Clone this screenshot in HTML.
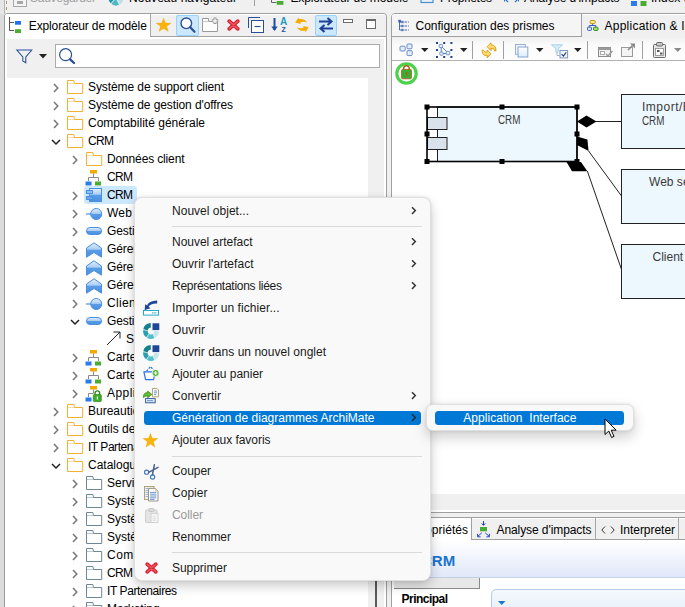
<!DOCTYPE html>
<html lang="fr"><head><meta charset="utf-8"><title>Explorateur de modèle</title>
<style>
html,body{margin:0;padding:0;}
body{width:685px;height:607px;overflow:hidden;background:#f0f0f0;position:relative;font-family:"Liberation Sans",sans-serif;font-size:12px;}
#root{position:absolute;left:0;top:0;width:685px;height:607px;overflow:hidden;}
.b{position:absolute;box-sizing:content-box;display:block;}
.t{position:absolute;white-space:pre;display:block;}
svg{overflow:visible;}
</style></head><body><div id="root">
<div class="b" style="left:0px;top:0px;width:685px;height:14px;background:#f0f0f0;"></div>
<svg class="b" style="left:13px;top:-6.5px;" width="14" height="16" viewBox="0 0 14 16"><rect x="0.5" y="0.5" width="13" height="12" fill="#f4f4f4" stroke="#a8a8a8"/><rect x="4" y="7" width="6" height="3" fill="#a8a8a8"/></svg>
<span class="t" style="left:30.0px;top:-10.7px;line-height:18px;font-size:12px;color:#a0a0a0;letter-spacing:-0.270px;">Sauvegarder</span>
<svg class="b" style="left:107.8px;top:-9.7px;" width="16" height="16" viewBox="0 0 16 16"><path d="M8 8L13.75 3.18A7.5 7.5 0 0 1 11.52 14.62Z" fill="#b8e0e6"/><path d="M8 8L11.52 14.62A7.5 7.5 0 0 1 2.98 13.57Z" fill="#4fb8c4"/><path d="M8 8L2.98 13.57A7.5 7.5 0 0 1 6.70 0.61Z" fill="#1a9ab0"/><path d="M8 8L11.76 15.06M8 8L2.65 13.95" stroke="#f4f8f8" stroke-width=".9"/></svg>
<span class="t" style="left:129.0px;top:-10.7px;line-height:18px;font-size:12px;color:#000;letter-spacing:0.036px;">Nouveau navigateur</span>
<div class="b" style="left:254px;top:0px;width:1px;height:6px;background:#a0a0a0;"></div>
<svg class="b" style="left:270px;top:-6px;" width="14" height="12" viewBox="0 0 14 12"><path d="M1.5 0V8.5H6.5" fill="none" stroke="#666" stroke-width="1"/><rect x="6.8" y="7" width="6.6" height="3.8" fill="#49ad33"/></svg>
<span class="t" style="left:290.5px;top:-10.7px;line-height:18px;font-size:12px;color:#000;letter-spacing:-0.136px;">Explorateur de modèle</span>
<svg class="b" style="left:420px;top:-8px;" width="14" height="12" viewBox="0 0 14 12"><rect x="1" y="0" width="12" height="10.5" fill="#e8f1fb" stroke="#4a90c8" stroke-width="1.2"/><path d="M4 7L9 3" stroke="#4a5fa8" stroke-width="1.3"/></svg>
<span class="t" style="left:440.0px;top:-10.7px;line-height:18px;font-size:12px;color:#000;letter-spacing:-0.299px;">Propriétés</span>
<svg class="b" style="left:504px;top:-2px;" width="15" height="8" viewBox="0 0 15 8"><path d="M1 1L4 4M14 1L11 4" stroke="#2a6fc0" stroke-width="1.2"/><path d="M0.5 3.5V0.5H3.5M14.5 3.5V0.5H11.5" stroke="#2a6fc0" stroke-width="1" fill="none"/></svg>
<span class="t" style="left:524.0px;top:-10.7px;line-height:18px;font-size:12px;color:#000;letter-spacing:-0.052px;">Analyse d'impacts</span>
<svg class="b" style="left:631px;top:1px;" width="16" height="6" viewBox="0 0 16 6"><rect x="0" y="0" width="6" height="5" fill="#2b7bea"/><rect x="9.5" y="0" width="6" height="5" fill="#49ad33"/></svg>
<span class="t" style="left:651.0px;top:-10.7px;line-height:18px;font-size:12px;color:#000;letter-spacing:-0.002px;">Index des</span>
<div class="b" style="left:0px;top:14px;width:4px;height:600px;background:#dcdcdc;"></div>
<div class="b" style="left:0px;top:0px;width:4px;height:14px;background:#e6e6e6;"></div>
<div class="b" style="left:3.5px;top:0px;width:1px;height:14px;background:#b4b4b4;"></div>
<div class="b" style="left:6px;top:1px;width:1px;height:3px;background:#b09a6a;"></div>
<div class="b" style="left:6px;top:7px;width:1px;height:3px;background:#b09a6a;"></div>
<div class="b" style="left:3.5px;top:13px;width:381px;height:600px;background:#fff;border:1px solid #a0a0a0;border-left:1.5px solid #9a9a9a;border-radius:4px 4px 0 0;"></div>
<div class="b" style="left:7px;top:39px;width:376.5px;height:580px;background:#f0f0f0;"></div>
<div class="b" style="left:5px;top:14px;width:381px;height:22px;background:linear-gradient(#fff 0,#fff 1px,#f0f0f0 1px);border-bottom:1px solid #a0a0a0;border-radius:3px 3px 0 0;"></div>
<div class="b" style="left:5px;top:14px;width:145px;height:23px;background:#fff;border-right:1px solid #a6a6a6;border-radius:3px 0 0 0;"></div>
<svg class="b" style="left:8px;top:17px;" width="14" height="17" viewBox="0 0 14 17"><path d="M1.5 0V13.5H6" fill="none" stroke="#555" stroke-width="1"/><path d="M1.5 5.5H6" stroke="#555" stroke-width="1"/><rect x="7" y="4" width="6" height="3.7" fill="#1f6ff0"/><rect x="7" y="12.2" width="6" height="3.8" fill="#49ad33"/></svg>
<span class="t" style="left:28.8px;top:16.5px;line-height:18px;font-size:12px;color:#000;letter-spacing:-0.136px;">Explorateur de modèle</span>
<svg class="b" style="left:155.8px;top:18.4px;" width="15.4" height="14" viewBox="0 0 15.4 14"><g transform="scale(.95 .9)"><path d="M8 0.4L9.9 5.6L15.8 5.8L11.2 9.3L12.8 14.8L8 11.6L3.2 14.8L4.8 9.3L0.2 5.8L6.1 5.6Z" fill="#f9b30a" stroke="#e8a000" stroke-width=".4"/></g></svg>
<div class="b" style="left:176px;top:14.5px;width:21px;height:19px;background:#cce8ff;border:1px solid #99d1ff;border-radius:2px;"></div>
<svg class="b" style="left:180px;top:17px;" width="16" height="16" viewBox="0 0 16 16"><circle cx="6.3" cy="6.3" r="5.3" fill="#fff" stroke="#2a4f9a" stroke-width="1.4"/><path d="M10.2 10.2L14.5 14.8" stroke="#2a4f9a" stroke-width="2.2" stroke-linecap="round"/></svg>
<svg class="b" style="left:202px;top:17px;" width="17" height="16" viewBox="0 0 17 16"><path d="M0.5 14.5V1.5H6.5V4.5H15.5V14.5Z" fill="#fcfcfc" stroke="#9a9a9a" stroke-width="1"/><path d="M0.5 4.5H6.5" stroke="#c8c8c8" stroke-width="1"/><path d="M13 0.6V7M9.8 3.8H16.2" stroke="#9a9a9a" stroke-width="3"/><path d="M13 1.5V6.1M10.7 3.8H15.3" stroke="#fff" stroke-width="1.2"/></svg>
<svg class="b" style="left:227px;top:19px;" width="13" height="12" viewBox="0 0 13 12"><path d="M2.2 2.2L10.8 9.8M10.8 2.2L2.2 9.8" stroke="#d41f2c" stroke-width="3.8" stroke-linecap="round"/><path d="M2.4 2.4L10.6 9.6M10.6 2.4L2.4 9.6" stroke="#f2525f" stroke-width="1.5" stroke-linecap="round"/></svg>
<svg class="b" style="left:248px;top:17px;" width="16" height="16" viewBox="0 0 16 16"><path d="M0.5 11V0.5H12" fill="none" stroke="#2a4f9a" stroke-width="1"/><rect x="3.5" y="3.5" width="12" height="12" fill="#fff" stroke="#2a4f9a" stroke-width="1"/><path d="M6.5 9.5H12.5" stroke="#2a4f9a" stroke-width="1.2"/></svg>
<svg class="b" style="left:271px;top:17px;" width="17" height="17" viewBox="0 0 17 17"><path d="M3.5 1V13" stroke="#1f4e9c" stroke-width="2"/><path d="M0.3 9.5L3.5 14L6.7 9.5Z" fill="#1f4e9c"/><text x="9" y="8.4" font-family="Liberation Sans, sans-serif" font-size="10" font-weight="bold" fill="#1f9dc0">A</text><text x="10.5" y="15" font-family="Liberation Sans, sans-serif" font-size="7" font-weight="bold" fill="#1f4e9c">Z</text></svg>
<svg class="b" style="left:290px;top:13px;" width="26" height="24" viewBox="0 0 26 24"><path d="M5.1 9.5L8.5 4.7L9 6.2C12 5.6 15.5 6.6 17.2 9.5C15 8.3 12.5 8.5 10.2 9.6L10.7 10.9Z" fill="#f5ab00"/><path d="M18.6 14.2L15.6 19.2L15 17.6C12 18.4 8.5 17.4 6.9 14.2C9 15.6 11.5 15.6 13.6 14.4L13.2 13Z" fill="#f5ab00"/></svg>
<div class="b" style="left:314.5px;top:14.5px;width:20.5px;height:19px;background:#cce8ff;border:1px solid #99d1ff;border-radius:2px;"></div>
<svg class="b" style="left:318px;top:17px;" width="16" height="16" viewBox="0 0 16 16"><path d="M1 4.5H13M9.5 1L13.5 4.5L9.5 8" fill="none" stroke="#1f3f94" stroke-width="2"/><path d="M15 11.5H3M6.5 8L2.5 11.5L6.5 15" fill="none" stroke="#1f3f94" stroke-width="2"/></svg>
<div class="b" style="left:343px;top:19.3px;width:8px;height:2px;border:1px solid #6a6a6a;background:#fff;"></div>
<div class="b" style="left:366px;top:19px;width:9px;height:9px;border:1px solid #6a6a6a;border-top:2px solid #6a6a6a;background:#fff;box-sizing:border-box;width:10.2px;height:10.4px;"></div>
<svg class="b" style="left:16px;top:48.5px;" width="17" height="15" viewBox="0 0 17 15"><path d="M0.8 1H15.8L9.8 8V13.8L6.8 12V8Z" fill="none" stroke="#2a4fa0" stroke-width="1.05" stroke-linejoin="miter"/></svg>
<svg class="b" style="left:39px;top:54px;" width="9" height="5" viewBox="0 0 9 5"><path d="M0 0H8L4 4.5Z" fill="#222"/></svg>
<div class="b" style="left:55px;top:44px;width:322.5px;height:22px;background:#fff;border:1px solid #ababab;"></div>
<svg class="b" style="left:59px;top:47.5px;" width="17" height="17" viewBox="0 0 17 17"><circle cx="6.6" cy="6.7" r="6" fill="#fff" stroke="#2a4f9a" stroke-width="1.2"/><path d="M11.2 11.4L15 15" stroke="#2a4f9a" stroke-width="2.4" stroke-linecap="round"/></svg>
<div class="b" style="left:5px;top:78px;width:363px;height:540px;background:#fff;"></div>
<div class="b" style="left:375px;top:400px;width:1.6px;height:220px;background:#5a5a5a;"></div>
<svg class="b" style="left:52.6px;top:83.2px;" width="6" height="10" viewBox="0 0 6 10"><path d="M1 1L4.8 5L1 9" fill="none" stroke="#767676" stroke-width="1.5"/></svg>
<svg class="b" style="left:67px;top:80px;" width="16" height="14" viewBox="0 0 16 14"><path d="M0.5 13.5V0.5H6.8L7.5 3.5H15.7V13.5Z" fill="#fff" stroke="#f2b134" stroke-width="1"/><path d="M0.5 3.5H7.5" fill="none" stroke="#f2b134" stroke-width="1" opacity=".45"/></svg>
<span class="t" style="left:88.0px;top:78.0px;line-height:18px;font-size:12px;color:#000;letter-spacing:-0.085px;">Système de support client</span>
<svg class="b" style="left:52.6px;top:101.2px;" width="6" height="10" viewBox="0 0 6 10"><path d="M1 1L4.8 5L1 9" fill="none" stroke="#767676" stroke-width="1.5"/></svg>
<svg class="b" style="left:67px;top:98px;" width="16" height="14" viewBox="0 0 16 14"><path d="M0.5 13.5V0.5H6.8L7.5 3.5H15.7V13.5Z" fill="#fff" stroke="#f2b134" stroke-width="1"/><path d="M0.5 3.5H7.5" fill="none" stroke="#f2b134" stroke-width="1" opacity=".45"/></svg>
<span class="t" style="left:88.0px;top:96.0px;line-height:18px;font-size:12px;color:#000;letter-spacing:-0.094px;">Système de gestion d'offres</span>
<svg class="b" style="left:52.6px;top:119.2px;" width="6" height="10" viewBox="0 0 6 10"><path d="M1 1L4.8 5L1 9" fill="none" stroke="#767676" stroke-width="1.5"/></svg>
<svg class="b" style="left:67px;top:116px;" width="16" height="14" viewBox="0 0 16 14"><path d="M0.5 13.5V0.5H6.8L7.5 3.5H15.7V13.5Z" fill="#fff" stroke="#f2b134" stroke-width="1"/><path d="M0.5 3.5H7.5" fill="none" stroke="#f2b134" stroke-width="1" opacity=".45"/></svg>
<span class="t" style="left:88.0px;top:114.0px;line-height:18px;font-size:12px;color:#000;letter-spacing:0.013px;">Comptabilité générale</span>
<svg class="b" style="left:50.6px;top:139px;" width="10" height="6" viewBox="0 0 10 6"><path d="M1 1L5 5L9 1" fill="none" stroke="#222" stroke-width="1.5"/></svg>
<svg class="b" style="left:67px;top:134px;" width="16" height="14" viewBox="0 0 16 14"><path d="M0.5 13.5V0.5H6.8L7.5 3.5H15.7V13.5Z" fill="#fff" stroke="#f2b134" stroke-width="1"/><path d="M0.5 3.5H7.5" fill="none" stroke="#f2b134" stroke-width="1" opacity=".45"/></svg>
<span class="t" style="left:88.0px;top:132.0px;line-height:18px;font-size:12px;color:#000;letter-spacing:-0.672px;">CRM</span>
<svg class="b" style="left:71.6px;top:155.2px;" width="6" height="10" viewBox="0 0 6 10"><path d="M1 1L4.8 5L1 9" fill="none" stroke="#767676" stroke-width="1.5"/></svg>
<svg class="b" style="left:86px;top:152px;" width="16" height="14" viewBox="0 0 16 14"><path d="M0.5 13.5V0.5H6.8L7.5 3.5H15.7V13.5Z" fill="#fff" stroke="#f2b134" stroke-width="1"/><path d="M0.5 3.5H7.5" fill="none" stroke="#f2b134" stroke-width="1" opacity=".45"/></svg>
<span class="t" style="left:107.0px;top:150.0px;line-height:18px;font-size:12px;color:#000;letter-spacing:-0.144px;">Données client</span>
<svg class="b" style="left:85.4px;top:169.5px;" width="16" height="16" viewBox="0 0 16 16"><rect x="5" y="0" width="7" height="3.5" fill="#f5a800"/><path d="M8.5 3.5V7.5M3.5 11V7.5H13.5V11" fill="none" stroke="#8a8a8a" stroke-width="1"/><rect x="0.5" y="11.5" width="6" height="4" fill="#2b7bea"/><rect x="10" y="11.5" width="6" height="4" fill="#49ad33"/></svg>
<span class="t" style="left:107.0px;top:168.0px;line-height:18px;font-size:12px;color:#000;letter-spacing:-0.672px;">CRM</span>
<div class="b" style="left:84px;top:186px;width:53px;height:18px;background:#cce8ff;border-radius:3px;"></div>
<svg class="b" style="left:71.6px;top:191.2px;" width="6" height="10" viewBox="0 0 6 10"><path d="M1 1L4.8 5L1 9" fill="none" stroke="#767676" stroke-width="1.5"/></svg>
<svg class="b" style="left:86.4px;top:187.5px;" width="16" height="16" viewBox="0 0 16 16"><defs><linearGradient id="gc" x1="0" y1="0" x2="0" y2="1"><stop offset="0" stop-color="#e6f1fc"/><stop offset=".45" stop-color="#a9cdf3"/><stop offset=".5" stop-color="#5a9de6"/><stop offset="1" stop-color="#4a8fe0"/></linearGradient></defs><rect x="3.5" y="0.5" width="12" height="13" fill="url(#gc)" stroke="#4a8fe0" stroke-width="1"/><rect x="0.5" y="2.5" width="6" height="3" fill="#8fbef0" stroke="#4a8fe0" stroke-width="1"/><rect x="0.5" y="8.5" width="6" height="3" fill="#6aa8ea" stroke="#4a8fe0" stroke-width="1"/></svg>
<span class="t" style="left:107.0px;top:186.0px;line-height:18px;font-size:12px;color:#000;letter-spacing:-0.672px;">CRM</span>
<svg class="b" style="left:71.6px;top:209.2px;" width="6" height="10" viewBox="0 0 6 10"><path d="M1 1L4.8 5L1 9" fill="none" stroke="#767676" stroke-width="1.5"/></svg>
<svg class="b" style="left:86.4px;top:205.5px;" width="16" height="16" viewBox="0 0 16 16"><defs><linearGradient id="gi" x1="0" y1="0" x2="0" y2="1"><stop offset="0" stop-color="#e6f1fc"/><stop offset=".45" stop-color="#a9cdf3"/><stop offset=".5" stop-color="#5a9de6"/><stop offset="1" stop-color="#4a8fe0"/></linearGradient></defs><path d="M0 8H5" stroke="#4a8fe0" stroke-width="1.2"/><circle cx="10.2" cy="8" r="5.5" fill="url(#gi)" stroke="#4a8fe0" stroke-width="1"/></svg>
<span class="t" style="left:107.0px;top:204.0px;line-height:18px;font-size:12px;color:#000;letter-spacing:0.220px;">Web service</span>
<svg class="b" style="left:71.6px;top:227.2px;" width="6" height="10" viewBox="0 0 6 10"><path d="M1 1L4.8 5L1 9" fill="none" stroke="#767676" stroke-width="1.5"/></svg>
<svg class="b" style="left:86.4px;top:222.7px;" width="16" height="16" viewBox="0 0 16 16"><defs><linearGradient id="gs" x1="0" y1="0" x2="0" y2="1"><stop offset="0" stop-color="#e6f1fc"/><stop offset=".45" stop-color="#a9cdf3"/><stop offset=".5" stop-color="#5a9de6"/><stop offset="1" stop-color="#4a8fe0"/></linearGradient></defs><rect x="0.5" y="4.5" width="15" height="7" rx="3.5" fill="url(#gs)" stroke="#4a8fe0" stroke-width="1"/></svg>
<span class="t" style="left:107.0px;top:222.0px;line-height:18px;font-size:12px;color:#000;letter-spacing:-0.076px;">Gestion des clients</span>
<svg class="b" style="left:71.6px;top:245.2px;" width="6" height="10" viewBox="0 0 6 10"><path d="M1 1L4.8 5L1 9" fill="none" stroke="#767676" stroke-width="1.5"/></svg>
<svg class="b" style="left:86.4px;top:241.5px;" width="16" height="16" viewBox="0 0 16 16"><defs><linearGradient id="gf" x1="0" y1="0" x2="0" y2="1"><stop offset="0" stop-color="#e6f1fc"/><stop offset=".45" stop-color="#a9cdf3"/><stop offset=".5" stop-color="#5a9de6"/><stop offset="1" stop-color="#4a8fe0"/></linearGradient></defs><path d="M0.5 6L8 0.8L15.5 6V15.2L8 10.5L0.5 15.2Z" fill="url(#gf)" stroke="#4a8fe0" stroke-width="1"/></svg>
<span class="t" style="left:107.0px;top:240.0px;line-height:18px;font-size:12px;color:#000;letter-spacing:-0.105px;">Gérer les clients</span>
<svg class="b" style="left:71.6px;top:263.2px;" width="6" height="10" viewBox="0 0 6 10"><path d="M1 1L4.8 5L1 9" fill="none" stroke="#767676" stroke-width="1.5"/></svg>
<svg class="b" style="left:86.4px;top:259.5px;" width="16" height="16" viewBox="0 0 16 16"><defs><linearGradient id="gf" x1="0" y1="0" x2="0" y2="1"><stop offset="0" stop-color="#e6f1fc"/><stop offset=".45" stop-color="#a9cdf3"/><stop offset=".5" stop-color="#5a9de6"/><stop offset="1" stop-color="#4a8fe0"/></linearGradient></defs><path d="M0.5 6L8 0.8L15.5 6V15.2L8 10.5L0.5 15.2Z" fill="url(#gf)" stroke="#4a8fe0" stroke-width="1"/></svg>
<span class="t" style="left:107.0px;top:258.0px;line-height:18px;font-size:12px;color:#000;letter-spacing:-0.138px;">Gérer les contacts</span>
<svg class="b" style="left:71.6px;top:281.2px;" width="6" height="10" viewBox="0 0 6 10"><path d="M1 1L4.8 5L1 9" fill="none" stroke="#767676" stroke-width="1.5"/></svg>
<svg class="b" style="left:86.4px;top:277.5px;" width="16" height="16" viewBox="0 0 16 16"><defs><linearGradient id="gf" x1="0" y1="0" x2="0" y2="1"><stop offset="0" stop-color="#e6f1fc"/><stop offset=".45" stop-color="#a9cdf3"/><stop offset=".5" stop-color="#5a9de6"/><stop offset="1" stop-color="#4a8fe0"/></linearGradient></defs><path d="M0.5 6L8 0.8L15.5 6V15.2L8 10.5L0.5 15.2Z" fill="url(#gf)" stroke="#4a8fe0" stroke-width="1"/></svg>
<span class="t" style="left:107.0px;top:276.0px;line-height:18px;font-size:12px;color:#000;letter-spacing:-0.030px;">Gérer les offres</span>
<svg class="b" style="left:71.6px;top:299.2px;" width="6" height="10" viewBox="0 0 6 10"><path d="M1 1L4.8 5L1 9" fill="none" stroke="#767676" stroke-width="1.5"/></svg>
<svg class="b" style="left:86.4px;top:295.5px;" width="16" height="16" viewBox="0 0 16 16"><defs><linearGradient id="gi" x1="0" y1="0" x2="0" y2="1"><stop offset="0" stop-color="#e6f1fc"/><stop offset=".45" stop-color="#a9cdf3"/><stop offset=".5" stop-color="#5a9de6"/><stop offset="1" stop-color="#4a8fe0"/></linearGradient></defs><path d="M0 8H5" stroke="#4a8fe0" stroke-width="1.2"/><circle cx="10.2" cy="8" r="5.5" fill="url(#gi)" stroke="#4a8fe0" stroke-width="1"/></svg>
<span class="t" style="left:107.0px;top:294.0px;line-height:18px;font-size:12px;color:#000;letter-spacing:0.330px;">Client web</span>
<svg class="b" style="left:69.6px;top:319px;" width="10" height="6" viewBox="0 0 10 6"><path d="M1 1L5 5L9 1" fill="none" stroke="#222" stroke-width="1.5"/></svg>
<svg class="b" style="left:86.4px;top:312.7px;" width="16" height="16" viewBox="0 0 16 16"><defs><linearGradient id="gs" x1="0" y1="0" x2="0" y2="1"><stop offset="0" stop-color="#e6f1fc"/><stop offset=".45" stop-color="#a9cdf3"/><stop offset=".5" stop-color="#5a9de6"/><stop offset="1" stop-color="#4a8fe0"/></linearGradient></defs><rect x="0.5" y="4.5" width="15" height="7" rx="3.5" fill="url(#gs)" stroke="#4a8fe0" stroke-width="1"/></svg>
<span class="t" style="left:107.0px;top:312.0px;line-height:18px;font-size:12px;color:#000;letter-spacing:-0.125px;">Gestion des offres</span>
<svg class="b" style="left:106px;top:331px;" width="15" height="15" viewBox="0 0 15 15"><path d="M1 14L14 1M7.5 1H14V7.5" fill="none" stroke="#222" stroke-width="1"/></svg>
<span class="t" style="left:126.0px;top:330.0px;line-height:18px;font-size:12px;color:#000;">Service de gestion</span>
<svg class="b" style="left:71.6px;top:353.2px;" width="6" height="10" viewBox="0 0 6 10"><path d="M1 1L4.8 5L1 9" fill="none" stroke="#767676" stroke-width="1.5"/></svg>
<svg class="b" style="left:85.4px;top:349.5px;" width="16" height="16" viewBox="0 0 16 16"><rect x="5" y="0" width="7" height="3.5" fill="#f5a800"/><path d="M8.5 3.5V7.5M3.5 11V7.5H13.5V11" fill="none" stroke="#8a8a8a" stroke-width="1"/><rect x="0.5" y="11.5" width="6" height="4" fill="#2b7bea"/><rect x="10" y="11.5" width="6" height="4" fill="#49ad33"/></svg>
<span class="t" style="left:107.0px;top:348.0px;line-height:18px;font-size:12px;color:#000;">Carte applicative</span>
<svg class="b" style="left:71.6px;top:371.2px;" width="6" height="10" viewBox="0 0 6 10"><path d="M1 1L4.8 5L1 9" fill="none" stroke="#767676" stroke-width="1.5"/></svg>
<svg class="b" style="left:85.4px;top:367.5px;" width="16" height="16" viewBox="0 0 16 16"><rect x="5" y="0" width="7" height="3.5" fill="#f5a800"/><path d="M8.5 3.5V7.5M3.5 11V7.5H13.5V11" fill="none" stroke="#8a8a8a" stroke-width="1"/><rect x="0.5" y="11.5" width="6" height="4" fill="#2b7bea"/><rect x="10" y="11.5" width="6" height="4" fill="#49ad33"/></svg>
<span class="t" style="left:107.0px;top:366.0px;line-height:18px;font-size:12px;color:#000;">Carte des services</span>
<svg class="b" style="left:71.6px;top:389.2px;" width="6" height="10" viewBox="0 0 6 10"><path d="M1 1L4.8 5L1 9" fill="none" stroke="#767676" stroke-width="1.5"/></svg>
<svg class="b" style="left:85.4px;top:385.5px;" width="16" height="16" viewBox="0 0 16 16"><rect x="5" y="0" width="7" height="3.5" fill="#f5a800"/><path d="M8.5 3.5V7.5M3.5 11V7.5H8" fill="none" stroke="#8a8a8a" stroke-width="1"/><rect x="0.5" y="11.5" width="6" height="4" fill="#2b7bea"/><path d="M10 9V7.2a2.3 2.3 0 0 1 4.6 0V9" fill="none" stroke="#2e8b1f" stroke-width="1.4"/><rect x="8.3" y="8.6" width="8" height="7" rx="1" fill="#3fae2a" stroke="#2e8b1f" stroke-width=".8"/><rect x="11.8" y="10.5" width="1.2" height="3" fill="#fff"/></svg>
<span class="t" style="left:107.0px;top:384.0px;line-height:18px;font-size:12px;color:#000;letter-spacing:0.433px;">Application &amp; Interfaces</span>
<svg class="b" style="left:52.6px;top:407.2px;" width="6" height="10" viewBox="0 0 6 10"><path d="M1 1L4.8 5L1 9" fill="none" stroke="#767676" stroke-width="1.5"/></svg>
<svg class="b" style="left:67px;top:404px;" width="16" height="14" viewBox="0 0 16 14"><path d="M0.5 13.5V0.5H6.8L7.5 3.5H15.7V13.5Z" fill="#fff" stroke="#f2b134" stroke-width="1"/><path d="M0.5 3.5H7.5" fill="none" stroke="#f2b134" stroke-width="1" opacity=".45"/></svg>
<span class="t" style="left:88.0px;top:402.0px;line-height:18px;font-size:12px;color:#000;">Bureautique</span>
<svg class="b" style="left:52.6px;top:425.2px;" width="6" height="10" viewBox="0 0 6 10"><path d="M1 1L4.8 5L1 9" fill="none" stroke="#767676" stroke-width="1.5"/></svg>
<svg class="b" style="left:67px;top:422px;" width="16" height="14" viewBox="0 0 16 14"><path d="M0.5 13.5V0.5H6.8L7.5 3.5H15.7V13.5Z" fill="#fff" stroke="#f2b134" stroke-width="1"/><path d="M0.5 3.5H7.5" fill="none" stroke="#f2b134" stroke-width="1" opacity=".45"/></svg>
<span class="t" style="left:88.0px;top:420.0px;line-height:18px;font-size:12px;color:#000;">Outils de développement</span>
<svg class="b" style="left:52.6px;top:443.2px;" width="6" height="10" viewBox="0 0 6 10"><path d="M1 1L4.8 5L1 9" fill="none" stroke="#767676" stroke-width="1.5"/></svg>
<svg class="b" style="left:67px;top:440px;" width="16" height="14" viewBox="0 0 16 14"><path d="M0.5 13.5V0.5H6.8L7.5 3.5H15.7V13.5Z" fill="#fff" stroke="#f2b134" stroke-width="1"/><path d="M0.5 3.5H7.5" fill="none" stroke="#f2b134" stroke-width="1" opacity=".45"/></svg>
<span class="t" style="left:88.0px;top:438.0px;line-height:18px;font-size:12px;color:#000;letter-spacing:-0.471px;">IT Partenaires</span>
<svg class="b" style="left:50.6px;top:463px;" width="10" height="6" viewBox="0 0 10 6"><path d="M1 1L5 5L9 1" fill="none" stroke="#222" stroke-width="1.5"/></svg>
<svg class="b" style="left:67px;top:458px;" width="16" height="14" viewBox="0 0 16 14"><path d="M0.5 13.5V0.5H6.8L7.5 3.5H15.7V13.5Z" fill="#fff" stroke="#f2b134" stroke-width="1"/><path d="M0.5 3.5H7.5" fill="none" stroke="#f2b134" stroke-width="1" opacity=".45"/></svg>
<span class="t" style="left:88.0px;top:456.0px;line-height:18px;font-size:12px;color:#000;">Catalogue de services</span>
<svg class="b" style="left:71.6px;top:479.2px;" width="6" height="10" viewBox="0 0 6 10"><path d="M1 1L4.8 5L1 9" fill="none" stroke="#767676" stroke-width="1.5"/></svg>
<svg class="b" style="left:86px;top:476px;" width="16" height="14" viewBox="0 0 16 14"><path d="M0.5 13.5V0.5H6.8L7.5 3.5H15.7V13.5Z" fill="#fff" stroke="#6e8794" stroke-width="1"/><path d="M0.5 3.5H7.5" fill="none" stroke="#6e8794" stroke-width="1" opacity=".45"/></svg>
<span class="t" style="left:107.0px;top:474.0px;line-height:18px;font-size:12px;color:#000;">Services transverses</span>
<svg class="b" style="left:71.6px;top:497.2px;" width="6" height="10" viewBox="0 0 6 10"><path d="M1 1L4.8 5L1 9" fill="none" stroke="#767676" stroke-width="1.5"/></svg>
<svg class="b" style="left:86px;top:494px;" width="16" height="14" viewBox="0 0 16 14"><path d="M0.5 13.5V0.5H6.8L7.5 3.5H15.7V13.5Z" fill="#fff" stroke="#6e8794" stroke-width="1"/><path d="M0.5 3.5H7.5" fill="none" stroke="#6e8794" stroke-width="1" opacity=".45"/></svg>
<span class="t" style="left:107.0px;top:492.0px;line-height:18px;font-size:12px;color:#000;">Système de support client</span>
<svg class="b" style="left:71.6px;top:515.2px;" width="6" height="10" viewBox="0 0 6 10"><path d="M1 1L4.8 5L1 9" fill="none" stroke="#767676" stroke-width="1.5"/></svg>
<svg class="b" style="left:86px;top:512px;" width="16" height="14" viewBox="0 0 16 14"><path d="M0.5 13.5V0.5H6.8L7.5 3.5H15.7V13.5Z" fill="#fff" stroke="#6e8794" stroke-width="1"/><path d="M0.5 3.5H7.5" fill="none" stroke="#6e8794" stroke-width="1" opacity=".45"/></svg>
<span class="t" style="left:107.0px;top:510.0px;line-height:18px;font-size:12px;color:#000;">Système de gestion d'offres</span>
<svg class="b" style="left:71.6px;top:533.2px;" width="6" height="10" viewBox="0 0 6 10"><path d="M1 1L4.8 5L1 9" fill="none" stroke="#767676" stroke-width="1.5"/></svg>
<svg class="b" style="left:86px;top:530px;" width="16" height="14" viewBox="0 0 16 14"><path d="M0.5 13.5V0.5H6.8L7.5 3.5H15.7V13.5Z" fill="#fff" stroke="#6e8794" stroke-width="1"/><path d="M0.5 3.5H7.5" fill="none" stroke="#6e8794" stroke-width="1" opacity=".45"/></svg>
<span class="t" style="left:107.0px;top:528.0px;line-height:18px;font-size:12px;color:#000;">Système comptable</span>
<svg class="b" style="left:71.6px;top:551.2px;" width="6" height="10" viewBox="0 0 6 10"><path d="M1 1L4.8 5L1 9" fill="none" stroke="#767676" stroke-width="1.5"/></svg>
<svg class="b" style="left:86px;top:548px;" width="16" height="14" viewBox="0 0 16 14"><path d="M0.5 13.5V0.5H6.8L7.5 3.5H15.7V13.5Z" fill="#fff" stroke="#6e8794" stroke-width="1"/><path d="M0.5 3.5H7.5" fill="none" stroke="#6e8794" stroke-width="1" opacity=".45"/></svg>
<span class="t" style="left:107.0px;top:546.0px;line-height:18px;font-size:12px;color:#000;letter-spacing:0.463px;">Comptabilité générale</span>
<svg class="b" style="left:71.6px;top:569.2px;" width="6" height="10" viewBox="0 0 6 10"><path d="M1 1L4.8 5L1 9" fill="none" stroke="#767676" stroke-width="1.5"/></svg>
<svg class="b" style="left:86px;top:566px;" width="16" height="14" viewBox="0 0 16 14"><path d="M0.5 13.5V0.5H6.8L7.5 3.5H15.7V13.5Z" fill="#fff" stroke="#6e8794" stroke-width="1"/><path d="M0.5 3.5H7.5" fill="none" stroke="#6e8794" stroke-width="1" opacity=".45"/></svg>
<span class="t" style="left:107.0px;top:564.0px;line-height:18px;font-size:12px;color:#000;letter-spacing:-0.672px;">CRM</span>
<svg class="b" style="left:71.6px;top:587.2px;" width="6" height="10" viewBox="0 0 6 10"><path d="M1 1L4.8 5L1 9" fill="none" stroke="#767676" stroke-width="1.5"/></svg>
<svg class="b" style="left:86px;top:584px;" width="16" height="14" viewBox="0 0 16 14"><path d="M0.5 13.5V0.5H6.8L7.5 3.5H15.7V13.5Z" fill="#fff" stroke="#6e8794" stroke-width="1"/><path d="M0.5 3.5H7.5" fill="none" stroke="#6e8794" stroke-width="1" opacity=".45"/></svg>
<span class="t" style="left:107.0px;top:582.0px;line-height:18px;font-size:12px;color:#000;letter-spacing:-0.394px;">IT Partenaires</span>
<svg class="b" style="left:71.6px;top:605.2px;" width="6" height="10" viewBox="0 0 6 10"><path d="M1 1L4.8 5L1 9" fill="none" stroke="#767676" stroke-width="1.5"/></svg>
<svg class="b" style="left:86px;top:602px;" width="16" height="14" viewBox="0 0 16 14"><path d="M0.5 13.5V0.5H6.8L7.5 3.5H15.7V13.5Z" fill="#fff" stroke="#6e8794" stroke-width="1"/><path d="M0.5 3.5H7.5" fill="none" stroke="#6e8794" stroke-width="1" opacity=".45"/></svg>
<span class="t" style="left:107.0px;top:600.0px;line-height:18px;font-size:12px;color:#000;">Marketing</span>
<div class="b" style="left:391px;top:13px;width:300px;height:498.2px;background:#fff;border:1px solid #a0a0a0;border-radius:4px 0 0 0;"></div>
<div class="b" style="left:392px;top:14px;width:293px;height:23px;background:linear-gradient(#fff 0,#fff 1px,#f0f0f0 1px);border-radius:3px 0 0 0;"></div>
<div class="b" style="left:392px;top:14px;width:188.5px;height:22px;background:linear-gradient(#fff 0,#fff 1px,#f5f5f5 1px);border-right:1px solid #a0a0a0;border-bottom:1px solid #a0a0a0;border-radius:3px 0 0 0;"></div>
<svg class="b" style="left:398px;top:19px;" width="12" height="13" viewBox="0 0 12 13"><path d="M1.5 1.5V11H3.5M1.5 3H3.5M1.5 7H3.5" fill="none" stroke="#4a6aa8" stroke-width="1"/><rect x="0.3" y="0.8" width="2.6" height="2.6" fill="#3b5fa8"/><rect x="3.2" y="1.8" width="2.4" height="2.4" fill="#5a7ab8"/><rect x="3.2" y="5.8" width="2.4" height="2.4" fill="#5a7ab8"/><rect x="3.2" y="9.8" width="2.4" height="2.4" fill="#5a7ab8"/><path d="M6.5 3H11M6.5 7H11M6.5 11H11" stroke="#4a6aa8" stroke-width="1.2" stroke-dasharray="2.6 1"/></svg>
<span class="t" style="left:415.5px;top:16.5px;line-height:18px;font-size:12px;color:#000;letter-spacing:-0.016px;">Configuration des prismes</span>
<svg class="b" style="left:587px;top:20px;" width="11.5" height="11" viewBox="0 0 11.5 11"><path d="M5.6 3.6V5.5M2.3 7V5.5H8.8V7" fill="none" stroke="#3a5fc0" stroke-width="1"/><rect x="3.2" y="0.5" width="5" height="3.1" rx=".8" fill="#ffeaa0" stroke="#c8960a" stroke-width="1"/><rect x="0.5" y="7.2" width="4" height="3.2" rx=".8" fill="#d8e8f8" stroke="#3a5fc0" stroke-width="1"/><rect x="6.6" y="7.2" width="4.4" height="3.2" rx=".8" fill="#b8e060" stroke="#2a8a2a" stroke-width="1"/></svg>
<span class="t" style="left:604.5px;top:16.5px;line-height:18px;font-size:12px;color:#000;letter-spacing:0.242px;">Application &amp; Interfaces</span>
<div class="b" style="left:392px;top:37px;width:293px;height:23px;background:linear-gradient(#f0f0f0 0,#fbfbfb 8px,#fdfdfd 100%);border-bottom:1px solid #b0b0b0;"></div>
<svg class="b" style="left:399px;top:41px;" width="15" height="15" viewBox="0 0 15 15"><rect x="1" y="5.2" width="5.2" height="4.8" rx="1" fill="#e4eefb" stroke="#6a8cc8"/><rect x="8" y="3" width="5" height="4.8" rx="1" fill="#e4eefb" stroke="#6a8cc8"/><rect x="8" y="9.6" width="5.2" height="5" rx="1" fill="#e4eefb" stroke="#6a8cc8"/></svg>
<svg class="b" style="left:420.5px;top:48.4px;" width="8" height="5" viewBox="0 0 8 5"><path d="M0 0H7.5L3.75 4Z" fill="#222"/></svg>
<svg class="b" style="left:436px;top:42px;" width="17" height="17" viewBox="0 0 17 17"><path d="M5 4L12 11M5 4L5.5 11.5M5.5 11.5H12" fill="none" stroke="#5a7fc0" stroke-width="1"/><rect x="3.2" y="2.4" width="3.4" height="3.2" rx=".8" fill="#e4eefb" stroke="#6a8cc8" stroke-width=".9"/><rect x="10.2" y="9.4" width="3.6" height="3.4" rx=".8" fill="#e4eefb" stroke="#6a8cc8" stroke-width=".9"/><rect x="3.8" y="10" width="3.4" height="3.2" rx=".8" fill="#e4eefb" stroke="#6a8cc8" stroke-width=".9"/><rect x="0" y="0" width="2" height="2" fill="#1f3f94"/><rect x="7.2" y="0" width="2" height="2" fill="#1f3f94"/><rect x="14.4" y="0" width="2" height="2" fill="#1f3f94"/><rect x="0" y="7" width="2" height="2" fill="#1f3f94"/><rect x="14.4" y="7" width="2" height="2" fill="#1f3f94"/><rect x="0" y="14" width="2" height="2" fill="#1f3f94"/><rect x="7.2" y="14" width="2" height="2" fill="#1f3f94"/><rect x="14.4" y="14" width="2" height="2" fill="#1f3f94"/></svg>
<svg class="b" style="left:459.5px;top:48.4px;" width="8" height="5" viewBox="0 0 8 5"><path d="M0 0H7.5L3.75 4Z" fill="#222"/></svg>
<div class="b" style="left:472px;top:41px;width:1px;height:17.5px;background:#a0a0a0;"></div>
<svg class="b" style="left:476px;top:38px;" width="26" height="24" viewBox="0 0 26 24"><defs><linearGradient id="gy" x1="0" y1="0" x2="0" y2="1"><stop offset="0" stop-color="#fff2a8"/><stop offset="1" stop-color="#f6c63a"/></linearGradient></defs><path d="M11.1 8.7L15 4.9V7C18 7 19.8 8 20 12.8H18.6C18 10.8 17 10.4 15 10.4V12.6Z" fill="url(#gy)" stroke="#d8960a" stroke-width=".9" stroke-linejoin="round"/><path d="M15 15.8L11.2 19.8V17.6C8 17.6 6.2 16.4 6 12.2L7.4 12C8 13.8 9 14.2 11.2 14.2V12Z" fill="url(#gy)" stroke="#d8960a" stroke-width=".9" stroke-linejoin="round"/></svg>
<div class="b" style="left:503px;top:41px;width:1px;height:17.5px;background:#a0a0a0;"></div>
<svg class="b" style="left:515px;top:43.6px;" width="14" height="14" viewBox="0 0 14 14"><defs><linearGradient id="gl" x1="0" y1="0" x2="0" y2="1"><stop offset="0" stop-color="#fff"/><stop offset="1" stop-color="#dcebfb"/></linearGradient></defs><rect x="0.5" y="0.5" width="9.8" height="9.8" fill="#f0f5fc" stroke="#9ab0d8"/><rect x="3" y="3" width="9.8" height="10" fill="url(#gl)" stroke="#8aa4d0"/></svg>
<svg class="b" style="left:535.8px;top:48.4px;" width="8" height="5" viewBox="0 0 8 5"><path d="M0 0H7.5L3.75 4Z" fill="#222"/></svg>
<svg class="b" style="left:549.5px;top:43.5px;" width="20" height="15" viewBox="0 0 20 15"><path d="M1.5 0.8H12.5L8.2 4.8V8.2H5.8V4.8Z" fill="#d4ecf9" stroke="#a6d2ec" stroke-width="1"/><path d="M7 8.2V11.5H9.5" fill="none" stroke="#a8b8c8"/><rect x="10" y="6.5" width="7.6" height="7.4" fill="#f4f8fd" stroke="#7a94c8"/><path d="M11.6 10.2L13.4 12L16.2 8.4" fill="none" stroke="#2a3f84" stroke-width="1.2"/></svg>
<svg class="b" style="left:574px;top:48.4px;" width="8" height="5" viewBox="0 0 8 5"><path d="M0 0H7.5L3.75 4Z" fill="#222"/></svg>
<div class="b" style="left:586.5px;top:41px;width:1px;height:17.5px;background:#a0a0a0;"></div>
<svg class="b" style="left:598px;top:45px;" width="16" height="13" viewBox="0 0 16 13"><rect x="0.5" y="2.5" width="12" height="9" fill="#f0f0f0" stroke="#8a8a8a"/><rect x="0.5" y="2.5" width="12" height="2.5" fill="#9a9a9a"/><rect x="2.5" y="6.5" width="4" height="3" fill="#fff" stroke="#9a9a9a" stroke-width=".8"/><path d="M8 9L10 11L14.5 6" fill="none" stroke="#9a9a9a" stroke-width="1.4"/></svg>
<svg class="b" style="left:621px;top:43.3px;" width="15" height="14" viewBox="0 0 15 14"><rect x="0.5" y="4.5" width="11" height="9" fill="#f4f4f4" stroke="#9a9a9a"/><path d="M7 7L12 2" stroke="#8a8a8a" stroke-width="1.6"/><path d="M9 0.5H14V5.5Z" fill="#8a8a8a"/></svg>
<div class="b" style="left:642px;top:41px;width:1px;height:17.5px;background:#a0a0a0;"></div>
<svg class="b" style="left:653px;top:41.8px;" width="13" height="16" viewBox="0 0 13 16"><rect x="0.5" y="2.5" width="12" height="13" rx="1" fill="#e8e8e8" stroke="#6a6a6a"/><rect x="3.5" y="0.5" width="6" height="3.5" rx="1" fill="#c8c8c8" stroke="#6a6a6a"/><rect x="2.5" y="6.5" width="8" height="7" fill="#fff" stroke="#8a8a8a" stroke-width=".8"/><rect x="4" y="8" width="2.5" height="2" fill="#555"/><rect x="7" y="10.5" width="2.5" height="2" fill="#555"/></svg>
<svg class="b" style="left:674px;top:48.4px;" width="8" height="5" viewBox="0 0 8 5"><path d="M0 0H7.5L3.75 4Z" fill="#8a8a8a"/></svg>
<div class="b" style="left:392px;top:61px;width:293px;height:433px;background:#fff;"></div>
<svg class="b" style="left:395px;top:62px;" width="23" height="23" viewBox="0 0 23 23"><circle cx="11.5" cy="11.5" r="9.7" fill="#fff" stroke="#4cd24c" stroke-width="3.2"/><path d="M8.7 8V6.6a2.8 2.8 0 0 1 5.6 0V8" fill="none" stroke="#b0601a" stroke-width="1.5"/><rect x="6.6" y="7.4" width="9.8" height="9.4" rx="1" fill="#35b035" stroke="#b0601a" stroke-width=".9"/><path d="M11.5 10V15M10.3 11.2H12.7" stroke="#b0601a" stroke-width="1"/></svg>
<svg class="b" style="left:0px;top:0px;" width="685" height="607" viewBox="0 0 685 607"><rect x="437.5" y="107" width="139.5" height="54.5" fill="#edf8fe" stroke="#222" stroke-width="1"/><rect x="427.5" y="117.5" width="19.5" height="12" fill="#d9e2ea" stroke="#222" stroke-width="1"/><rect x="427.5" y="137.5" width="19.5" height="12" fill="#d9e2ea" stroke="#222" stroke-width="1"/><rect x="427" y="107" width="150" height="54.5" fill="none" stroke="#000" stroke-width="1.6"/><rect x="424.5" y="104.5" width="5" height="5" fill="#000"/><rect x="499.5" y="104.5" width="5" height="5" fill="#000"/><rect x="574.5" y="104.5" width="5" height="5" fill="#000"/><rect x="424.5" y="131.5" width="5" height="5" fill="#000"/><rect x="574.5" y="131.5" width="5" height="5" fill="#000"/><rect x="424.5" y="159" width="5" height="5" fill="#000"/><rect x="499.5" y="159" width="5" height="5" fill="#000"/><rect x="574.5" y="159" width="5" height="5" fill="#000"/><path d="M577 121.4L586.5 115.5L596.5 121.4L586.5 127.5Z" fill="#000"/><path d="M596 121.5H622" stroke="#222" stroke-width="1"/><path d="M577 136.5L587.4 139.5L588.6 151L577 145Z" fill="#000"/><path d="M588.6 151L621.5 196" stroke="#222" stroke-width="1"/><path d="M566.5 162L581 162L587.4 171.2L572 171.2Z" fill="#000"/><path d="M587.4 171.2L621.5 269.5" stroke="#222" stroke-width="1"/><rect x="621.5" y="94.5" width="70" height="54" fill="#edf8fe" stroke="#222" stroke-width="1"/><rect x="621.5" y="169.5" width="70" height="54" fill="#edf8fe" stroke="#222" stroke-width="1"/><rect x="621.5" y="244.5" width="70" height="54" fill="#edf8fe" stroke="#222" stroke-width="1"/></svg>
<span class="t" style="left:498.0px;top:111.0px;line-height:18px;font-size:12px;color:#3a3a3a;font-family:'Liberation Sans',sans-serif;transform:scaleX(.82);transform-origin:0 50%;">CRM</span>
<span class="t" style="left:642.0px;top:98.0px;line-height:18px;font-size:12px;color:#3a3a3a;letter-spacing:0.500px;font-family:'Liberation Sans',sans-serif;">Import/Export</span>
<span class="t" style="left:642.0px;top:112.0px;line-height:18px;font-size:12px;color:#3a3a3a;font-family:'Liberation Sans',sans-serif;transform:scaleX(.82);transform-origin:0 50%;">CRM</span>
<span class="t" style="left:649.0px;top:172.5px;line-height:18px;font-size:12px;color:#3a3a3a;letter-spacing:0.020px;font-family:'Liberation Sans',sans-serif;">Web service</span>
<span class="t" style="left:652.5px;top:247.5px;line-height:18px;font-size:12px;color:#3a3a3a;letter-spacing:-0.003px;font-family:'Liberation Sans',sans-serif;">Client web</span>
<div class="b" style="left:392px;top:494px;width:293px;height:15.6px;background:#f0f0f0;"></div>
<div class="b" style="left:391px;top:516.7px;width:300px;height:100px;background:#fff;border:1px solid #a0a0a0;"></div>
<div class="b" style="left:392px;top:517.7px;width:293px;height:21.8px;background:linear-gradient(#fff 0,#fff 1px,#f0f0f0 1px);border-bottom:1px solid #a0a0a0;"></div>
<div class="b" style="left:392px;top:517.7px;width:79px;height:22.8px;background:#fff;border-right:1px solid #a0a0a0;"></div>
<span class="t" style="left:413.0px;top:521.0px;line-height:18px;font-size:12px;color:#000;letter-spacing:0.035px;">Propriétés</span>
<svg class="b" style="left:475px;top:521px;" width="17" height="17" viewBox="0 0 17 17"><path d="M8.5 0V4M6.7 2.4L8.5 4.4L10.3 2.4" fill="none" stroke="#2040c0" stroke-width="1"/><rect x="5" y="6" width="7" height="4.3" fill="#49ad33"/><path d="M6.8 11.8L3 15.2M10.2 11.8L14 15.2" stroke="#2040c0" stroke-width="1"/><path d="M2.6 12.8V15.8H5.6M14.4 12.8V15.8H11.4" fill="none" stroke="#2040c0" stroke-width="1"/></svg>
<span class="t" style="left:496.5px;top:521.0px;line-height:18px;font-size:12px;color:#000;letter-spacing:-0.083px;">Analyse d'impacts</span>
<div class="b" style="left:595px;top:518px;width:1px;height:21.5px;background:#a6a6a6;"></div>
<svg class="b" style="left:600.5px;top:526px;" width="14" height="8" viewBox="0 0 14 8"><path d="M4 0.5L0.8 4L4 7.5M10 0.5L13.2 4L10 7.5" fill="none" stroke="#333" stroke-width="1"/></svg>
<span class="t" style="left:620.0px;top:521.0px;line-height:18px;font-size:12px;color:#000;letter-spacing:-0.034px;">Interpreter</span>
<div class="b" style="left:678px;top:518px;width:1px;height:21.5px;background:#a6a6a6;"></div>
<div class="b" style="left:392px;top:540.5px;width:293px;height:36.5px;background:linear-gradient(#fff 0%,#f3f6fd 40%,#e0e7f8 100%);border-bottom:1px solid #c4cfe8;"></div>
<span class="t" style="left:421.0px;top:551.8px;line-height:18px;font-size:15px;color:#1874d0;font-weight:bold;">CRM</span>
<div class="b" style="left:394px;top:578px;width:85px;height:10px;background:#e8e8e8;border-right:1px solid #8a8a8a;border-bottom:1px solid #8a8a8a;"></div>
<span class="t" style="left:401.5px;top:590.0px;line-height:18px;font-size:12px;color:#000;letter-spacing:-0.520px;font-weight:bold;">Principal</span>
<div class="b" style="left:490.5px;top:588.5px;width:210px;height:30px;background:linear-gradient(#f4f8fd,#e4edf8);border:1px solid #b5cbe4;border-radius:5px;"></div>
<svg class="b" style="left:498px;top:601px;" width="8" height="5" viewBox="0 0 8 5"><path d="M0 0H7.5L3.75 4Z" fill="#1c77cf"/></svg>
<div class="b" style="left:133.7px;top:196.6px;width:297px;height:384px;background:#f9f9f9;border:1px solid #e0e0e0;border-radius:8px;box-shadow:0 5px 12px rgba(0,0,0,.2),0 0 3px rgba(0,0,0,.1);box-sizing:border-box;"></div>
<span class="t" style="left:172.0px;top:201.5px;line-height:18px;font-size:12px;color:#1a1a1a;letter-spacing:0.022px;">Nouvel objet...</span>
<svg class="b" style="left:410.8px;top:205.9px;" width="6" height="10" viewBox="0 0 6 10"><path d="M1 1.2L4.3 4.6L1 8" fill="none" stroke="#333" stroke-width="1.5"/></svg>
<span class="t" style="left:172.0px;top:232.5px;line-height:18px;font-size:12px;color:#1a1a1a;letter-spacing:-0.013px;">Nouvel artefact</span>
<svg class="b" style="left:410.8px;top:236.9px;" width="6" height="10" viewBox="0 0 6 10"><path d="M1 1.2L4.3 4.6L1 8" fill="none" stroke="#333" stroke-width="1.5"/></svg>
<span class="t" style="left:172.0px;top:254.5px;line-height:18px;font-size:12px;color:#1a1a1a;letter-spacing:0.033px;">Ouvrir l'artefact</span>
<svg class="b" style="left:410.8px;top:258.9px;" width="6" height="10" viewBox="0 0 6 10"><path d="M1 1.2L4.3 4.6L1 8" fill="none" stroke="#333" stroke-width="1.5"/></svg>
<span class="t" style="left:172.0px;top:276.5px;line-height:18px;font-size:12px;color:#1a1a1a;letter-spacing:-0.270px;">Représentations liées</span>
<svg class="b" style="left:410.8px;top:280.9px;" width="6" height="10" viewBox="0 0 6 10"><path d="M1 1.2L4.3 4.6L1 8" fill="none" stroke="#333" stroke-width="1.5"/></svg>
<svg class="b" style="left:143.2px;top:299.5px;" width="16" height="16" viewBox="0 0 16 16"><path d="M14.2 0.6C8.5 0.8 5 3 4.2 5.4L2.2 4.2L1.6 10L7.6 8.2L5.6 6.8C6.6 4.6 9.5 3.2 14.2 3.4Z" fill="#1f4596"/><rect x="0.5" y="10.5" width="15" height="4.6" fill="#fff" stroke="#2aa8c8" stroke-width="1"/><path d="M9.2 12.9H13.4" stroke="#2aa8c8" stroke-width="1.3" stroke-dasharray="1 .55"/></svg>
<span class="t" style="left:172.0px;top:298.5px;line-height:18px;font-size:12px;color:#1a1a1a;letter-spacing:0.071px;">Importer un fichier...</span>
<svg class="b" style="left:143.2px;top:321.5px;" width="16" height="16" viewBox="0 0 16 16"><rect x="9.5" y="1.3" width="6.8" height="6.8" fill="#1f4596"/><path d="M0.27 7.36A7.9 7.9 0 0 1 7.72 1.10L7.88 5.60A3.4 3.4 0 0 0 4.67 8.29Z" fill="#17808e"/><path d="M3.14 15.23A7.9 7.9 0 0 1 0.14 8.17L4.62 8.64A3.4 3.4 0 0 0 5.91 11.68Z" fill="#2a9fb0"/><path d="M11.46 16.10A7.9 7.9 0 0 1 3.81 15.70L6.20 11.88A3.4 3.4 0 0 0 9.49 12.06Z" fill="#4fbfcc"/><path d="M15.90 9.28A7.9 7.9 0 0 1 12.19 15.70L9.80 11.88A3.4 3.4 0 0 0 11.40 9.12Z" fill="#c4e6ec"/></svg>
<span class="t" style="left:172.0px;top:320.5px;line-height:18px;font-size:12px;color:#1a1a1a;letter-spacing:0.066px;">Ouvrir</span>
<svg class="b" style="left:143.2px;top:343.5px;" width="16" height="16" viewBox="0 0 16 16"><rect x="9.5" y="1.3" width="6.8" height="6.8" fill="#1f4596"/><path d="M0.27 7.36A7.9 7.9 0 0 1 7.72 1.10L7.88 5.60A3.4 3.4 0 0 0 4.67 8.29Z" fill="#17808e"/><path d="M3.14 15.23A7.9 7.9 0 0 1 0.14 8.17L4.62 8.64A3.4 3.4 0 0 0 5.91 11.68Z" fill="#2a9fb0"/><path d="M11.46 16.10A7.9 7.9 0 0 1 3.81 15.70L6.20 11.88A3.4 3.4 0 0 0 9.49 12.06Z" fill="#4fbfcc"/><path d="M15.90 9.28A7.9 7.9 0 0 1 12.19 15.70L9.80 11.88A3.4 3.4 0 0 0 11.40 9.12Z" fill="#c4e6ec"/></svg>
<span class="t" style="left:172.0px;top:342.5px;line-height:18px;font-size:12px;color:#1a1a1a;letter-spacing:0.023px;">Ouvrir dans un nouvel onglet</span>
<svg class="b" style="left:143.2px;top:365.5px;" width="16" height="16" viewBox="0 0 16 16"><path d="M0.9 5.9H12.2L10.6 13.6H2.6Z" fill="#fff" stroke="#2a6ff0" stroke-width="1.2" stroke-linejoin="round"/><path d="M3.6 5.2L7.5 0.6L11.4 5.2" fill="none" stroke="#2a6ff0" stroke-width="1.2" stroke-dasharray="2.2 1.2"/><circle cx="12.6" cy="7" r="3.5" fill="#4fb52f" stroke="#fff" stroke-width=".8"/><path d="M12.6 5.1V8.9M10.7 7H14.5" stroke="#fff" stroke-width="1.2"/></svg>
<span class="t" style="left:172.0px;top:364.5px;line-height:18px;font-size:12px;color:#1a1a1a;letter-spacing:-0.023px;">Ajouter au panier</span>
<svg class="b" style="left:143.2px;top:387.5px;" width="16" height="16" viewBox="0 0 16 16"><path d="M9.5 0.5H14L15.5 2V8.8H9.5Z" fill="#fff" stroke="#a89a6a" stroke-width=".9"/><path d="M11 3H14M11 4.8H14M11 6.6H13.2" stroke="#4a7ac0" stroke-width=".8"/><path d="M0.4 9.6C0.2 6 2 4.6 4.6 4.6V3L8.9 6.4L4.6 9.9V8.2C3 8.1 1.6 8.4 0.4 9.6Z" fill="#62b733" stroke="#3e8a14" stroke-width=".7" stroke-linejoin="round"/><rect x="2.6" y="10.6" width="9.6" height="4.2" fill="#dfeaf8" stroke="#2a4f9a" stroke-width=".9"/><path d="M4.4 12.7H10" stroke="#2a4f9a" stroke-width="1" stroke-dasharray="1.2 .8"/></svg>
<span class="t" style="left:172.0px;top:386.5px;line-height:18px;font-size:12px;color:#1a1a1a;letter-spacing:0.039px;">Convertir</span>
<svg class="b" style="left:410.8px;top:390.9px;" width="6" height="10" viewBox="0 0 6 10"><path d="M1 1.2L4.3 4.6L1 8" fill="none" stroke="#333" stroke-width="1.5"/></svg>
<div class="b" style="left:143.8px;top:411px;width:277px;height:13.8px;background:#0078d6;border-radius:3.5px;"></div>
<span class="t" style="left:172.0px;top:408.5px;line-height:18px;font-size:12px;color:#fff;letter-spacing:0.013px;">Génération de diagrammes ArchiMate</span>
<svg class="b" style="left:410.8px;top:412.9px;" width="6" height="10" viewBox="0 0 6 10"><path d="M1 1.2L4.3 4.6L1 8" fill="none" stroke="#2a2a2a" stroke-width="1.5"/></svg>
<svg class="b" style="left:143px;top:432.5px;" width="15" height="14.5" viewBox="0 0 15 14.5"><g transform="scale(.93 .95)"><path d="M8 0.4L9.9 5.6L15.8 5.8L11.2 9.3L12.8 14.8L8 11.6L3.2 14.8L4.8 9.3L0.2 5.8L6.1 5.6Z" fill="#f9b30a" stroke="#e8a000" stroke-width=".4"/></g></svg>
<span class="t" style="left:172.0px;top:430.5px;line-height:18px;font-size:12px;color:#1a1a1a;letter-spacing:-0.048px;">Ajouter aux favoris</span>
<svg class="b" style="left:143.7px;top:463.5px;" width="16" height="16" viewBox="0 0 16 16"><circle cx="2.6" cy="8.2" r="2.1" fill="none" stroke="#3a78c0" stroke-width="1.1"/><circle cx="8.6" cy="13" r="2.1" fill="none" stroke="#3a78c0" stroke-width="1.1"/><path d="M4.6 8.4L14 3.4M8.4 10.8L10.4 0.8" stroke="#4a5f8a" stroke-width="1.5" stroke-linecap="round"/></svg>
<span class="t" style="left:172.0px;top:461.5px;line-height:18px;font-size:12px;color:#1a1a1a;letter-spacing:-0.072px;">Couper</span>
<svg class="b" style="left:143.9px;top:485.5px;" width="16" height="16" viewBox="0 0 16 16"><rect x="0.5" y="0.5" width="9.5" height="13" fill="#eef2f8" stroke="#b09a6a" stroke-width=".9"/><path d="M2.2 2V12M3.8 2V12" stroke="#5a86c8" stroke-width=".8" stroke-dasharray="1 1"/><path d="M4.5 2.4H11L14 5.2V15H4.5Z" fill="#fff" stroke="#8a8a78" stroke-width=".9"/><path d="M11 2.4V5.2H14Z" fill="#d8c89a"/><path d="M6 6.4H12.4M6 8.2H12.4M6 10H12.4M6 11.8H12.4M6 13.4H10.5" stroke="#4a7ac0" stroke-width=".8"/></svg>
<span class="t" style="left:172.0px;top:483.5px;line-height:18px;font-size:12px;color:#1a1a1a;letter-spacing:0.028px;">Copier</span>
<svg class="b" style="left:144px;top:508px;" width="16" height="16" viewBox="0 0 16 16"><rect x="1.5" y="2" width="11.5" height="12.5" rx="1.2" fill="#e4e4e4" stroke="#cdcdcd"/><rect x="4.5" y="0.5" width="5.5" height="3" rx="1.2" fill="#dadada" stroke="#c8c8c8"/><rect x="7" y="5.5" width="7" height="9" fill="#f6f6f6" stroke="#d0d0d0" stroke-width=".9"/><path d="M8.6 8.5H11.5M8.6 10.5H12.4M8.6 12.3H12.4" stroke="#d8d8d8" stroke-width=".8"/></svg>
<span class="t" style="left:172.0px;top:505.5px;line-height:18px;font-size:12px;color:#9a9a9a;letter-spacing:-0.072px;">Coller</span>
<span class="t" style="left:172.0px;top:527.5px;line-height:18px;font-size:12px;color:#1a1a1a;letter-spacing:-0.051px;">Renommer</span>
<svg class="b" style="left:145.2px;top:561.9px;" width="13" height="12" viewBox="0 0 13 12"><path d="M2.2 2.2L10.8 9.8M10.8 2.2L2.2 9.8" stroke="#d41f2c" stroke-width="3.8" stroke-linecap="round"/><path d="M2.4 2.4L10.6 9.6M10.6 2.4L2.4 9.6" stroke="#f2525f" stroke-width="1.5" stroke-linecap="round"/></svg>
<span class="t" style="left:172.0px;top:558.5px;line-height:18px;font-size:12px;color:#1a1a1a;letter-spacing:-0.045px;">Supprimer</span>
<div class="b" style="left:172px;top:226px;width:250px;height:1px;background:#d9d9d9;"></div>
<div class="b" style="left:172px;top:455.5px;width:250px;height:1px;background:#d9d9d9;"></div>
<div class="b" style="left:172px;top:551.5px;width:250px;height:1px;background:#d9d9d9;"></div>
<div class="b" style="left:425.7px;top:403.8px;width:208.5px;height:27.4px;background:#f9f9f9;border:1px solid #e0e0e0;border-radius:7px;box-shadow:0 6px 14px rgba(0,0,0,.2),0 0 3px rgba(0,0,0,.1);box-sizing:border-box;"></div>
<div class="b" style="left:434.8px;top:411px;width:189.5px;height:13.9px;background:#0078d6;border-radius:3.5px;"></div>
<span class="t" style="left:463.3px;top:409.0px;line-height:18px;font-size:12px;color:#fff;letter-spacing:0.046px;">Application  Interface</span>
<svg class="b" style="left:604px;top:418.4px;" width="14" height="21" viewBox="0 0 14 21"><path d="M1 1V16.5L4.8 13L7.6 19.5L10 18.4L7.2 12.2H12.2Z" fill="#fff" stroke="#000" stroke-width="1" stroke-linejoin="miter"/></svg>
</div></body></html>
